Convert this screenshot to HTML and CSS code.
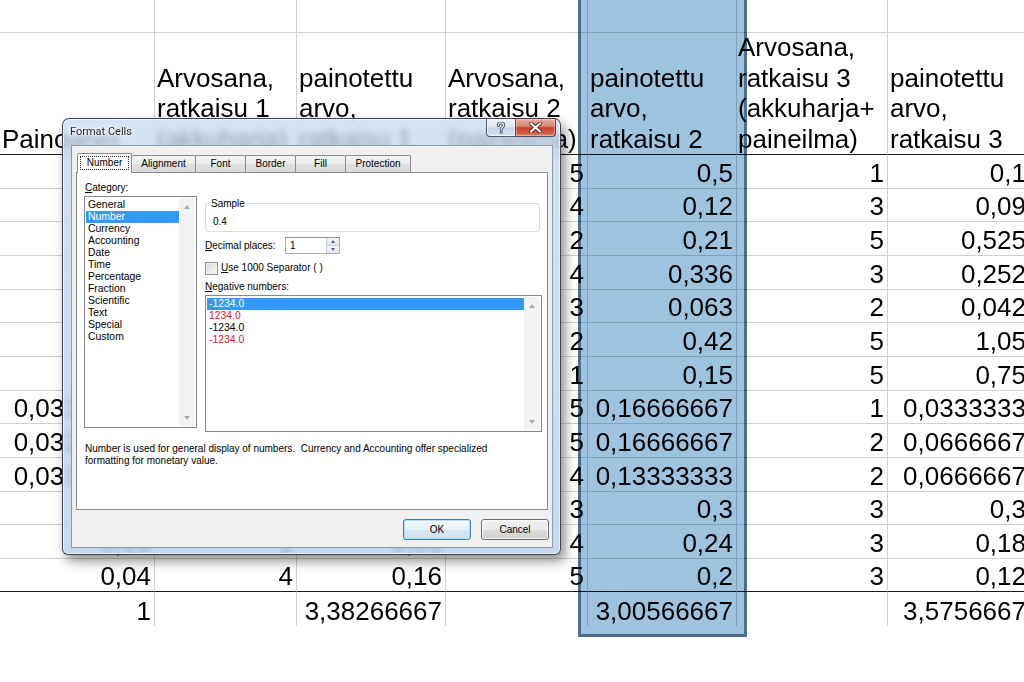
FILE: index.html
```html
<!DOCTYPE html>
<html lang="fi">
<head>
<meta charset="utf-8">
<title>Format Cells</title>
<link rel="stylesheet" href="styles.css">
</head>
<body>
<div class="sheet">
  <div class="c"></div><div class="c"></div><div class="c"></div><div class="c"></div><div class="c"></div><div class="c"></div><div class="c"></div>

  <div class="c h"><span>Painoarvo</span></div>
  <div class="c h"><span>Arvosana,</span><span>ratkaisu 1</span><span>(akkuharja)</span></div>
  <div class="c h"><span>painotettu</span><span>arvo,</span><span>ratkaisu 1</span></div>
  <div class="c h"><span>Arvosana,</span><span>ratkaisu 2</span><span>(paineilma)</span></div>
  <div class="c h"><span>painotettu</span><span>arvo,</span><span>ratkaisu 2</span></div>
  <div class="c h hf"><span>Arvosana,</span><span>ratkaisu 3</span><span>(akkuharja+</span><span>paineilma)</span></div>
  <div class="c h"><span>painotettu</span><span>arvo,</span><span>ratkaisu 3</span></div>

  <div class="c n"></div><div class="c n"></div><div class="c n"></div><div class="c n">5</div><div class="c n">0,5</div><div class="c n">1</div><div class="c n">0,1</div>
  <div class="c n"></div><div class="c n"></div><div class="c n"></div><div class="c n">4</div><div class="c n">0,12</div><div class="c n">3</div><div class="c n">0,09</div>
  <div class="c n"></div><div class="c n"></div><div class="c n"></div><div class="c n">2</div><div class="c n">0,21</div><div class="c n">5</div><div class="c n">0,525</div>
  <div class="c n"></div><div class="c n"></div><div class="c n"></div><div class="c n">4</div><div class="c n">0,336</div><div class="c n">3</div><div class="c n">0,252</div>
  <div class="c n"></div><div class="c n"></div><div class="c n"></div><div class="c n">3</div><div class="c n">0,063</div><div class="c n">2</div><div class="c n">0,042</div>
  <div class="c n"></div><div class="c n"></div><div class="c n"></div><div class="c n">2</div><div class="c n">0,42</div><div class="c n">5</div><div class="c n">1,05</div>
  <div class="c n"></div><div class="c n"></div><div class="c n"></div><div class="c n">1</div><div class="c n">0,15</div><div class="c n">5</div><div class="c n">0,75</div>
  <div class="c n">0,03333333</div><div class="c n"></div><div class="c n"></div><div class="c n">5</div><div class="c n">0,16666667</div><div class="c n">1</div><div class="c n">0,0333333</div>
  <div class="c n">0,03333333</div><div class="c n"></div><div class="c n"></div><div class="c n">5</div><div class="c n">0,16666667</div><div class="c n">2</div><div class="c n">0,0666667</div>
  <div class="c n">0,03333333</div><div class="c n"></div><div class="c n"></div><div class="c n">4</div><div class="c n">0,13333333</div><div class="c n">2</div><div class="c n">0,0666667</div>
  <div class="c n"></div><div class="c n"></div><div class="c n"></div><div class="c n">3</div><div class="c n">0,3</div><div class="c n">3</div><div class="c n">0,3</div>
  <div class="c n">0,06</div><div class="c n">1</div><div class="c n">0,06</div><div class="c n">4</div><div class="c n">0,24</div><div class="c n">3</div><div class="c n">0,18</div>
  <div class="c n b">0,04</div><div class="c n b">4</div><div class="c n b">0,16</div><div class="c n b">5</div><div class="c n b">0,2</div><div class="c n b">3</div><div class="c n b">0,12</div>

  <div class="c n t">1</div><div class="c n t"></div><div class="c n t">3,38266667</div><div class="c n t"></div><div class="c n t">3,00566667</div><div class="c n t"></div><div class="c n t">3,5756667</div>
</div>

<div class="selection"></div>

<div class="dialog">
  <div class="titlebar">
    <span class="title">Format Cells</span>
    <div class="caption-btns">
      <div class="cbtn help">
        <svg width="10" height="12" viewBox="0 0 10 12">
          <path d="M2.3 3.6 C2.3 1.6 3.6 0.9 5 0.9 C6.6 0.9 7.7 1.9 7.7 3.3 C7.7 4.9 5.2 5.3 5.2 7.3" fill="none" stroke="#3c4c60" stroke-width="3" stroke-linecap="round"/>
          <circle cx="5.2" cy="10.2" r="1.5" fill="#3c4c60"/>
          <path d="M2.3 3.6 C2.3 1.6 3.6 0.9 5 0.9 C6.6 0.9 7.7 1.9 7.7 3.3 C7.7 4.9 5.2 5.3 5.2 7.3" fill="none" stroke="#f4f7fb" stroke-width="1.3" stroke-linecap="round"/>
          <circle cx="5.2" cy="10.2" r="0.7" fill="#f4f7fb"/>
        </svg>
      </div>
      <div class="cbtn close">
        <svg width="13" height="11" viewBox="0 0 13 11">
          <path d="M2 1.5 L11 9.5 M11 1.5 L2 9.5" stroke="#5a2218" stroke-width="4" stroke-linecap="round"/>
          <path d="M2 1.5 L11 9.5 M11 1.5 L2 9.5" stroke="#ffffff" stroke-width="2.2" stroke-linecap="round"/>
        </svg>
      </div>
    </div>
  </div>
  <div class="client">
    <div class="tabs">
      <div class="tab active w-number"><span class="focus">Number</span></div>
      <div class="tab w-align">Alignment</div>
      <div class="tab w-font">Font</div>
      <div class="tab w-border">Border</div>
      <div class="tab w-fill">Fill</div>
      <div class="tab w-prot">Protection</div>
    </div>
    <div class="panel">
      <div class="cols">
        <div class="left">
          <div class="lbl"><u>C</u>ategory:</div>
          <div class="listbox cat">
            <div class="items">
              <div class="item">General</div>
              <div class="item sel">Number</div>
              <div class="item">Currency</div>
              <div class="item">Accounting</div>
              <div class="item">Date</div>
              <div class="item">Time</div>
              <div class="item">Percentage</div>
              <div class="item">Fraction</div>
              <div class="item">Scientific</div>
              <div class="item">Text</div>
              <div class="item">Special</div>
              <div class="item">Custom</div>
            </div>
            <div class="sb"><span class="arr up"></span><span class="arr dn"></span></div>
          </div>
        </div>
        <div class="right">
          <fieldset class="sample">
            <legend>Sample</legend>
            <div class="sample-val">0.4</div>
          </fieldset>
          <div class="dec-row">
            <span class="dec-lbl"><u>D</u>ecimal places:</span>
            <div class="spin">
              <span class="spin-val">1</span>
              <div class="spin-btns">
                <span class="sbtn"><span class="tri up"></span></span>
                <span class="sbtn"><span class="tri dn"></span></span>
              </div>
            </div>
          </div>
          <div class="chk-row">
            <span class="chk"></span>
            <span><u>U</u>se 1000 Separator ( )</span>
          </div>
          <div class="lbl2"><u>N</u>egative numbers:</div>
          <div class="listbox neg">
            <div class="items">
              <div class="item sel">-1234.0</div>
              <div class="item red">1234.0</div>
              <div class="item">-1234.0</div>
              <div class="item red">-1234.0</div>
            </div>
            <div class="sb"><span class="arr up"></span><span class="arr dn"></span></div>
          </div>
        </div>
      </div>
      <p class="desc">Number is used for general display of numbers.&nbsp; Currency and Accounting offer specialized<br>formatting for monetary value.</p>
    </div>
    <div class="buttons">
      <button class="btn default">OK</button>
      <button class="btn">Cancel</button>
    </div>
  </div>
</div>
</body>
</html>
```

FILE: styles.css
```css
html, body {
  margin: 0;
  padding: 0;
}
body {
  width: 1024px;
  height: 682px;
  overflow: hidden;
  position: relative;
  background: #ffffff;
  font-family: "Liberation Sans", Arial, sans-serif;
  color: #000;
}

/* ---------- spreadsheet ---------- */
.sheet {
  display: grid;
  width: max-content;
  grid-template-columns: 155px 142px 149px 142px 149px 151px 142px;
  grid-template-rows: 33px 122px 34px 33px 34px 34px 33px 34px 34px 33px 34px 34px 33px 34px 33px 34px;
  font-size: 26px;
}
.c {
  box-sizing: border-box;
  border-right: 1px solid #d0d0d0;
  border-bottom: 1px solid #d0d0d0;
  white-space: nowrap;
  min-width: 0;
}
.h {
  display: flex;
  flex-direction: column;
  justify-content: flex-end;
  padding-left: 2px;
  line-height: 30.5px;
  border-bottom-color: #1a1a1a;
}
.hf {
  padding-left: 1px;
}
.n {
  display: flex;
  justify-content: flex-end;
  align-items: flex-end;
  padding-right: 3px;
  line-height: 30px;
}
.b {
  border-bottom-color: #1a1a1a;
}
.t {
  border-bottom: none;
}

.selection {
  position: absolute;
  left: 578px;
  top: -3px;
  width: 169px;
  height: 640px;
  box-sizing: border-box;
  border: 3px solid #4b6e8c;
  background: #9ec3df;
  mix-blend-mode: multiply;
  pointer-events: none;
}

/* ---------- dialog ---------- */
.dialog {
  position: absolute;
  left: 62px;
  top: 118px;
  width: 499px;
  height: 437px;
  box-sizing: border-box;
  display: flex;
  flex-direction: column;
  padding: 0 7px 6px 8px;
  border: 1px solid rgba(35, 45, 60, 0.85);
  border-radius: 7px 7px 6px 6px;
  background: linear-gradient(rgba(196, 216, 238, 0.72), rgba(184, 208, 234, 0.8));
  backdrop-filter: blur(3px);
  box-shadow: inset 0 0 0 1px rgba(255, 255, 255, 0.6), 4px 6px 12px rgba(0, 0, 0, 0.45);
  font-family: "Liberation Sans", Arial, sans-serif;
  font-size: 10px;
  color: #000;
  z-index: 3;
}
.titlebar {
  height: 26px;
  display: flex;
  align-items: flex-start;
  margin-right: -3px;
}
.title {
  margin: 6px 0 0 -1px;
  font-family: Roboto, "Noto Sans", sans-serif;
  font-size: 11px;
  line-height: 13px;
  color: #1e1e1e;
  text-shadow: 0 0 5px #fff, 0 0 3px #fff, 0 0 2px #fff;
}
.caption-btns {
  margin-left: auto;
  display: flex;
}
.cbtn {
  height: 18px;
  box-sizing: border-box;
  border: 1px solid rgba(45, 55, 70, 0.8);
  border-top: none;
  display: flex;
  align-items: center;
  justify-content: center;
}
.help {
  width: 30px;
  border-radius: 0 0 0 4px;
  background: linear-gradient(#f0f5fa, #dae4ef 48%, #c6d5e5 52%, #d6e2ef);
  box-shadow: inset 0 0 0 1px rgba(255, 255, 255, 0.6);
}
.close {
  width: 41px;
  margin-left: -1px;
  border-radius: 0 0 4px 0;
  background: linear-gradient(#eab0a3, #d98572 42%, #c5432d 52%, #cf5a3f 80%, #e08a68);
  box-shadow: inset 0 0 0 1px rgba(255, 220, 210, 0.45);
}

.client {
  flex: 1;
  display: flex;
  flex-direction: column;
  background: #f0f0f0;
  border: 1px solid #8a9cb2;
  padding: 9px 4px 0 4px;
}

.tabs {
  display: flex;
  align-items: flex-start;
  height: 18px;
  margin: 0 0 -1px 1px;
  position: relative;
  z-index: 1;
}
.tab {
  box-sizing: border-box;
  height: 17px;
  margin-left: -1px;
  border: 1px solid #898c95;
  border-bottom: none;
  border-radius: 2px 2px 0 0;
  background: linear-gradient(#f4f4f4, #ebebeb 50%, #e0e0e0 51%, #d8d8d8);
  text-align: center;
  line-height: 15px;
  white-space: nowrap;
}
.tab:first-child {
  margin-left: 0;
}
.tab.active {
  height: 20px;
  margin-top: -2px;
  background: #ffffff;
  position: relative;
  z-index: 2;
}
.focus {
  display: block;
  margin: 2px 2px 0;
  height: 14px;
  box-sizing: border-box;
  border: 1px dotted #333;
  line-height: 12px;
}
.w-number { width: 55px; }
.w-align { width: 65px; }
.w-font { width: 51px; }
.w-border { width: 51px; }
.w-fill { width: 51px; }
.w-prot { width: 66px; }

.panel {
  height: 338px;
  box-sizing: border-box;
  border: 1px solid #898c95;
  background: #ffffff;
  padding: 6px 0 0 7px;
}
.cols {
  display: flex;
  gap: 8px;
  align-items: flex-start;
}
.left {
  width: 113px;
}
.right {
  width: 337px;
}
.lbl {
  height: 17px;
  line-height: 17px;
  margin-left: 1px;
}

.listbox {
  box-sizing: border-box;
  border: 1px solid #828790;
  padding: 1px;
  display: flex;
  background: #fff;
}
.listbox.cat {
  height: 232px;
}
.listbox.neg {
  height: 137px;
  margin-top: 1px;
}
.items {
  flex: 1;
  padding-top: 1px;
}
.item {
  height: 12px;
  line-height: 12px;
  padding-left: 2px;
  white-space: nowrap;
  font-size: 10.4px;
}
.item.sel {
  background: #3399ff;
  color: #fff;
}
.item.red {
  color: #e4162a;
}
.sb {
  width: 16px;
  background: #f3f3f3;
  display: flex;
  flex-direction: column;
  justify-content: space-between;
  align-items: center;
  padding: 7px 0 6px;
  box-sizing: border-box;
}
.arr {
  width: 0;
  height: 0;
  border-left: 3.5px solid transparent;
  border-right: 3.5px solid transparent;
}
.arr.up {
  border-bottom: 4px solid #a9a9a9;
}
.arr.dn {
  border-top: 4px solid #a9a9a9;
}

.sample {
  margin: 18px 0 0;
  width: 335px;
  box-sizing: border-box;
  padding: 0 0 3px 4px;
  border: 1px solid #d5dfe5;
  border-radius: 3px;
}
.sample legend {
  padding: 0 2px;
  margin-left: -1px;
  line-height: 13px;
}
.sample-val {
  margin-top: 6px;
  line-height: 12px;
  padding-left: 3px;
}

.dec-row {
  display: flex;
  align-items: center;
  height: 17px;
  margin-top: 5px;
}
.dec-lbl {
  width: 80px;
}
.spin {
  width: 55px;
  height: 17px;
  box-sizing: border-box;
  border: 1px solid #abadb3;
  border-top-color: #8e9096;
  display: flex;
  background: #fff;
}
.spin-val {
  padding-left: 4px;
  line-height: 15px;
}
.spin-btns {
  margin-left: auto;
  width: 12px;
  display: flex;
  flex-direction: column;
  border-left: 1px solid #c9cbd0;
}
.sbtn {
  flex: 1;
  display: flex;
  align-items: center;
  justify-content: center;
  background: linear-gradient(#f5f6f8, #e2e6ec);
  border-bottom: 1px solid #c9cbd0;
}
.sbtn:last-child {
  border-bottom: none;
}
.tri {
  width: 0;
  height: 0;
  border-left: 2.5px solid transparent;
  border-right: 2.5px solid transparent;
}
.tri.up {
  border-bottom: 3px solid #4d6185;
}
.tri.dn {
  border-top: 3px solid #4d6185;
}

.chk-row {
  display: flex;
  align-items: center;
  gap: 3px;
  height: 14px;
  margin-top: 7px;
  line-height: 14px;
}
.chk {
  width: 13px;
  height: 13px;
  box-sizing: border-box;
  border: 1px solid #8e8f8f;
  background: linear-gradient(135deg, #d8d8d8, #f8f8f8);
  box-shadow: inset 0 0 0 1px #f2f2f2;
}
.lbl2 {
  height: 14px;
  line-height: 14px;
  margin-top: 5px;
}

.desc {
  margin: 11px 0 0 1px;
  line-height: 12px;
  white-space: nowrap;
}

.buttons {
  display: flex;
  justify-content: flex-end;
  gap: 10px;
  margin: 9px -1px 0 0;
}
.btn {
  width: 68px;
  height: 21px;
  box-sizing: border-box;
  padding: 0;
  font-family: "Liberation Sans", Arial, sans-serif;
  font-size: 10px;
  color: #000;
  border: 1px solid #707070;
  border-radius: 3px;
  background: linear-gradient(#f2f2f2, #ebebeb 50%, #dddddd 51%, #cfcfcf);
  box-shadow: inset 0 0 0 1px rgba(255, 255, 255, 0.7);
}
.btn.default {
  border-color: #3c7fb1;
  background: linear-gradient(#f4f9fd, #e6f1f9 50%, #d6e8f5 51%, #cfe3f2);
  box-shadow: inset 0 0 0 1px #b8dcf2;
}
```
